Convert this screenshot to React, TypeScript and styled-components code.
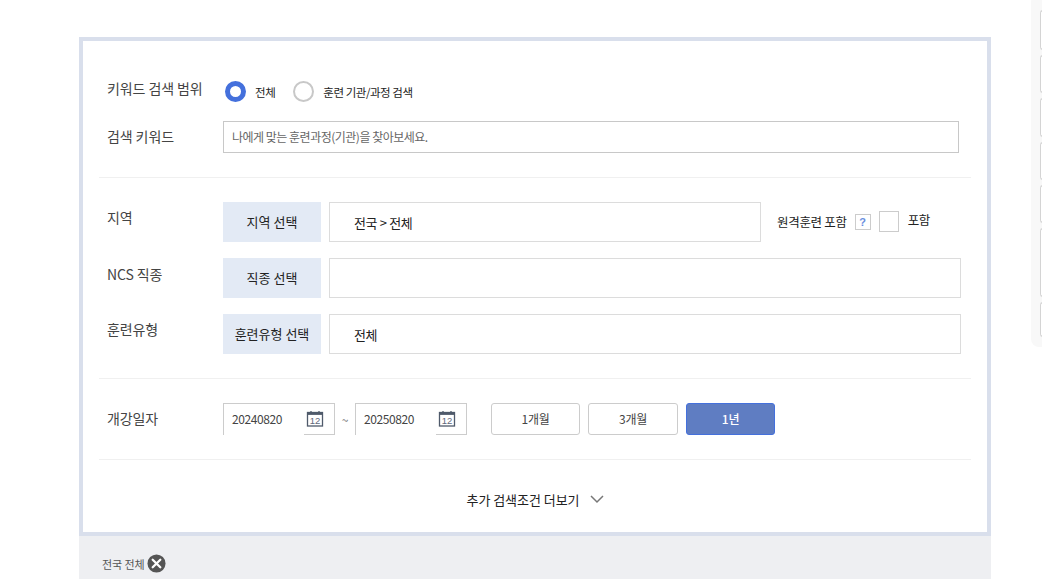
import React from 'react';
import styled, { createGlobalStyle } from 'styled-components';

const GlobalStyle = createGlobalStyle`
	html, body {
		margin: 0;
		padding: 0;
		background: #fff;
		overflow: hidden;
	}
	* {
		box-sizing: border-box;
	}
	body {
		font-family: 'Noto Sans CJK KR', 'Noto Sans', sans-serif;
		color: #222;
	}
`;

const Page = styled.div`
	position: relative;
	width: 1042px;
	height: 579px;
	overflow: hidden;
	padding: 37px 0 0 79px;
`;

const SearchBox = styled.div`
	width: 912px;
	height: 499px;
	border: 4px solid #d9dfec;
	background: #fff;
	padding: 0 16px;
	display: flex;
	flex-direction: column;
`;

const Section = styled.div<{ $height: number; $pad: number; $gap?: number }>`
	height: ${(p) => p.$height}px;
	padding-top: ${(p) => p.$pad}px;
	border-bottom: 1px solid #f0f0f0;
	display: flex;
	flex-direction: column;
	gap: ${(p) => p.$gap ?? 0}px;
`;

const Row = styled.div<{ $height: number }>`
	height: ${(p) => p.$height}px;
	display: flex;
	align-items: center;
`;

const Label = styled.div<{ $up?: number }>`
	width: 124px;
	padding-left: 8px;
	flex: none;
	font-size: 14px;
	line-height: 20px;
	letter-spacing: -0.1px;
	color: #444;
	position: relative;
	top: ${(p) => p.$up ?? 0}px;
`;

const RadioGroup = styled.div`
	display: flex;
	align-items: center;
	margin-left: 2px;
`;

const RadioMark = styled.span<{ $on?: boolean }>`
	width: 21px;
	height: 21px;
	border-radius: 50%;
	flex: none;
	background: #fff;
	border: ${(p) => (p.$on ? '5px solid #4470dc' : '2px solid #c8c8c8')};
	margin-right: 9px;
`;

const RadioText = styled.span<{ $gap: number }>`
	font-size: 11.5px;
	line-height: 18px;
	letter-spacing: -0.45px;
	color: #222;
	margin-right: ${(p) => p.$gap}px;
`;

const KeywordInput = styled.div`
	width: 736px;
	height: 32px;
	border: 1px solid #c8c8c8;
	padding-left: 8px;
	font-size: 12px;
	line-height: 29px;
	letter-spacing: -0.5px;
	color: #666;
`;

const SelectBtn = styled.div`
	width: 98px;
	height: 40px;
	flex: none;
	margin-right: 8px;
	background: #e3eaf5;
	font-size: 13px;
	line-height: 40px;
	text-align: center;
	color: #222;
`;

const ValueBox = styled.div<{ $width: number }>`
	width: ${(p) => p.$width}px;
	height: 40px;
	flex: none;
	border: 1px solid #dcdcdc;
	padding-left: 24px;
	font-size: 13px;
	line-height: 39px;
	letter-spacing: -0.35px;
	color: #222;
`;

const RemoteWrap = styled.div`
	display: flex;
	align-items: center;
	margin-left: 16px;
	height: 40px;
`;

const RemoteText = styled.span`
	font-size: 12.5px;
	line-height: 18px;
	letter-spacing: -0.3px;
	color: #222;
	margin-right: 8px;
`;

const HelpMark = styled.span`
	width: 16px;
	height: 16px;
	border: 1px solid #ccc;
	font-family: 'Liberation Sans', sans-serif;
	font-size: 11px;
	font-weight: 700;
	line-height: 14px;
	text-align: center;
	color: #6a8fe0;
	margin-right: 8px;
`;

const CheckMark = styled.span`
	width: 20px;
	height: 21px;
	border: 1px solid #ccc;
	margin: -2px 9px 0 0;
`;

const CheckText = styled.span`
	font-size: 12.5px;
	line-height: 18px;
	letter-spacing: -0.4px;
	color: #222;
	margin-top: -5px;
`;

const DateField = styled.div`
	width: 112px;
	height: 32px;
	flex: none;
	display: flex;
`;

const DateText = styled.div`
	width: 81px;
	border: solid #ccc;
	border-width: 1px 0 0 1px;
	padding-left: 8px;
	font-size: 12px;
	line-height: 30px;
	letter-spacing: -0.4px;
	color: #444;
`;

const DateIcon = styled.div`
	width: 31px;
	border: solid #ccc;
	border-width: 1px 1px 1px 0;
	padding: 6px 0 0 2px;
	svg {
		display: block;
	}
`;

const Tilde = styled.span`
	width: 20px;
	text-align: center;
	font-size: 12px;
	color: #777;
`;

const RangeGroup = styled.div`
	display: flex;
	gap: 8px;
	margin-left: 24px;
`;

const RangeBtn = styled.div<{ $on?: boolean; $width: number }>`
	width: ${(p) => p.$width}px;
	height: 32px;
	border-radius: 3px;
	border: 1px solid ${(p) => (p.$on ? '#4470dc' : '#ccc')};
	background: ${(p) => (p.$on ? '#5f7dc2' : '#fff')};
	color: ${(p) => (p.$on ? '#fff' : '#444')};
	font-size: 12px;
	font-weight: ${(p) => (p.$on ? 500 : 400)};
	line-height: 29px;
	letter-spacing: -0.3px;
	text-align: center;
`;

const MoreRow = styled.div`
	flex: 1;
	display: flex;
	align-items: center;
	justify-content: center;
	gap: 10px;
	padding: 6px 0 0 2px;
	font-size: 13px;
	letter-spacing: -0.05px;
	color: #222;
	svg {
		display: block;
	}
`;

const ResultBar = styled.div`
	width: 912px;
	height: 43px;
	background: #eeeff2;
	padding: 18px 0 0 23px;
	display: flex;
	align-items: flex-start;
	gap: 3px;
	font-size: 11px;
	line-height: 20px;
	letter-spacing: -0.1px;
	color: #555;
	svg {
		display: block;
	}
`;

const QuickMenu = styled.div`
	position: absolute;
	top: -6px;
	left: 1031px;
	width: 30px;
	height: 353px;
	padding: 16px 0 0 9px;
	background: #f8f8f8;
	border-radius: 8px 0 0 8px;
	display: flex;
	flex-direction: column;
	gap: 5px;
`;

const QuickItem = styled.div<{ $height: number }>`
	height: ${(p) => p.$height}px;
	flex: none;
	border: 1px solid #d4d4d4;
	border-right: 0;
	border-radius: 3px 0 0 3px;
	background: #fff;
`;

const CalendarIcon = () => (
	<svg width="18" height="18" viewBox="0 0 18 18" fill="none">
		<rect x="1.5" y="2.5" width="15" height="13.5" stroke="#4f5a6b" strokeWidth="1.3" />
		<rect x="1.5" y="2.5" width="15" height="2.4" fill="#4f5a6b" />
		<path d="M5 1v3M13 1v3" stroke="#4f5a6b" strokeWidth="1.3" />
		<text x="9" y="14" textAnchor="middle" fontSize="9.5" fontFamily="Liberation Sans, sans-serif" fill="#5f6a7b">
			12
		</text>
	</svg>
);

const ChevronIcon = () => (
	<svg width="16" height="10" viewBox="0 0 16 10" fill="none">
		<path d="M2 2l6 6 6-6" stroke="#777" strokeWidth="1.5" />
	</svg>
);

const CloseIcon = () => (
	<svg width="19" height="19" viewBox="0 0 20 20">
		<circle cx="10" cy="10" r="9.5" fill="#555" />
		<path d="M6 6l8 8M14 6l-8 8" stroke="#fff" strokeWidth="2.4" strokeLinecap="round" />
	</svg>
);

const quickHeights = [40, 38, 39, 38, 38, 69, 35];

export default function App() {
	return (
		<>
			<GlobalStyle />
			<Page>
				<SearchBox>
					<Section $height={137} $pad={38} $gap={17}>
						<Row $height={25}>
							<Label $up={-4}>키워드 검색 범위</Label>
							<RadioGroup>
								<RadioMark $on />
								<RadioText $gap={18}>전체</RadioText>
								<RadioMark />
								<RadioText $gap={0}>훈련 기관/과정 검색</RadioText>
							</RadioGroup>
						</Row>
						<Row $height={32}>
							<Label $up={-1}>검색 키워드</Label>
							<KeywordInput>나에게 맞는 훈련과정(기관)을 찾아보세요.</KeywordInput>
						</Row>
					</Section>
					<Section $height={201} $pad={24} $gap={16}>
						<Row $height={40}>
							<Label $up={-5}>지역</Label>
							<SelectBtn>지역 선택</SelectBtn>
							<ValueBox $width={432}>전국 &gt; 전체</ValueBox>
							<RemoteWrap>
								<RemoteText>원격훈련 포함</RemoteText>
								<HelpMark>?</HelpMark>
								<CheckMark />
								<CheckText>포함</CheckText>
							</RemoteWrap>
						</Row>
						<Row $height={40}>
							<Label $up={-4}>NCS 직종</Label>
							<SelectBtn>직종 선택</SelectBtn>
							<ValueBox $width={632} />
						</Row>
						<Row $height={40}>
							<Label $up={-5}>훈련유형</Label>
							<SelectBtn>훈련유형 선택</SelectBtn>
							<ValueBox $width={632}>전체</ValueBox>
						</Row>
					</Section>
					<Section $height={81} $pad={24}>
						<Row $height={32}>
							<Label $up={-1}>개강일자</Label>
							<DateField>
								<DateText>20240820</DateText>
								<DateIcon>
									<CalendarIcon />
								</DateIcon>
							</DateField>
							<Tilde>~</Tilde>
							<DateField>
								<DateText>20250820</DateText>
								<DateIcon>
									<CalendarIcon />
								</DateIcon>
							</DateField>
							<RangeGroup>
								<RangeBtn $width={89}>1개월</RangeBtn>
								<RangeBtn $width={90}>3개월</RangeBtn>
								<RangeBtn $width={89} $on>
									1년
								</RangeBtn>
							</RangeGroup>
						</Row>
					</Section>
					<MoreRow>
						추가 검색조건 더보기
						<ChevronIcon />
					</MoreRow>
				</SearchBox>
				<ResultBar>
					전국 전체
					<CloseIcon />
				</ResultBar>
				<QuickMenu>
					{quickHeights.map((h, i) => (
						<QuickItem key={i} $height={h} />
					))}
				</QuickMenu>
			</Page>
		</>
	);
}
